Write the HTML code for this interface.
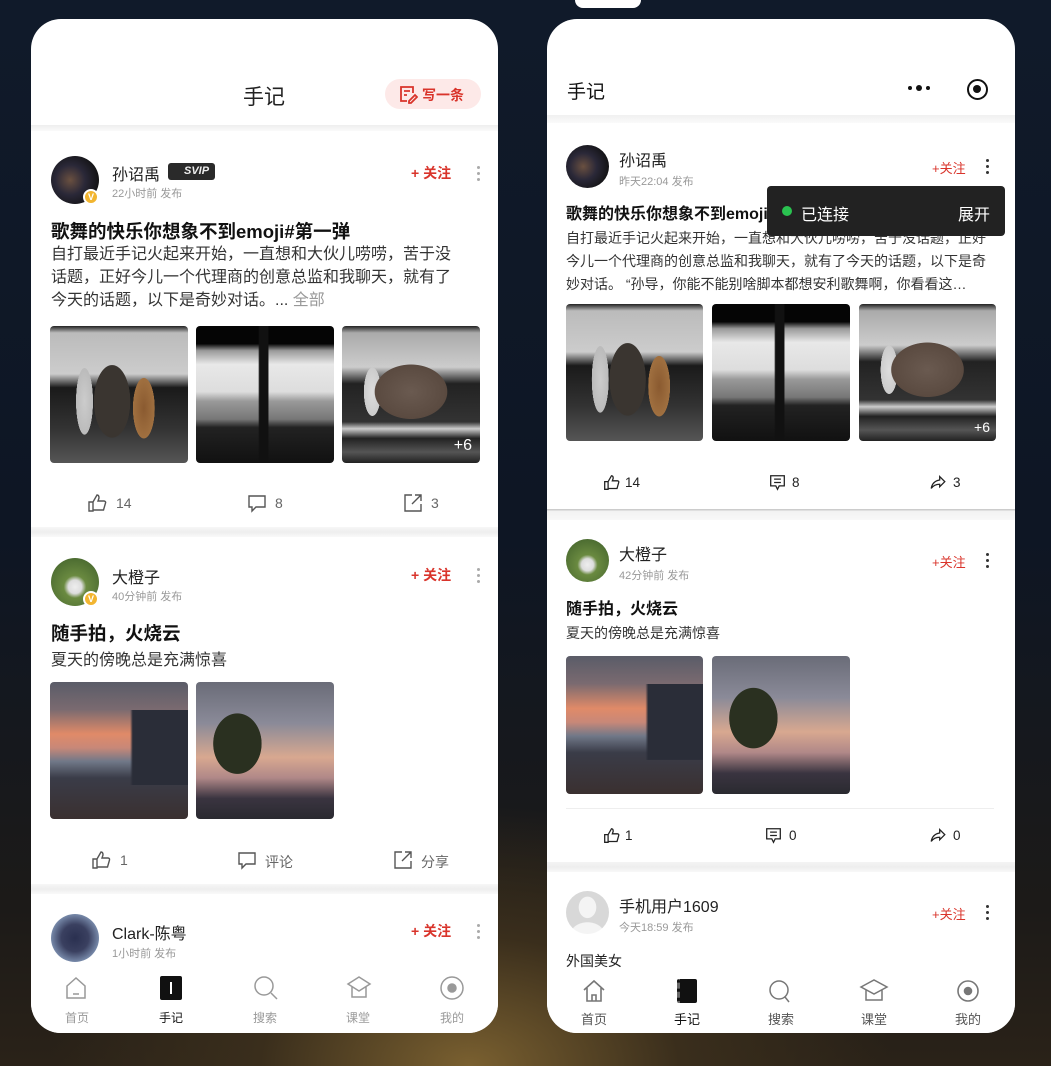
<!DOCTYPE html>
<html><head><meta charset="utf-8">
<style>
*{margin:0;padding:0;box-sizing:border-box}
body{width:1051px;height:1066px;overflow:hidden;position:relative;font-family:"Liberation Sans","Noto Sans CJK SC",sans-serif;
background:radial-gradient(ellipse 420px 260px at 470px 1066px,#7a6030 0%,#3a2e1c 50%,transparent 100%),linear-gradient(180deg,#101a2a 0%,#0e1624 50%,#1c1a18 85%,#2a2218 100%);}
.a{position:absolute}
.ph{position:absolute;background:#fff;border-radius:30px;overflow:hidden}
.t{position:absolute;white-space:nowrap;color:#222}
.sep{position:absolute;background:#f2f2f2}
.av{position:absolute;border-radius:50%;overflow:hidden}
.red{color:#d9342b}
.gray{color:#999}
.dots{position:absolute;width:3px}
.dots i{display:block;width:3px;height:3px;border-radius:50%;background:#aaa;margin-bottom:3px}
.img{position:absolute;border-radius:4px;overflow:hidden}
.dance1{background:radial-gradient(ellipse 30px 60px at 45% 55%,#3a3530 0%,#3a3530 60%,transparent 61%),radial-gradient(ellipse 14px 55px at 25% 55%,#ccc 0%,#bbb 60%,transparent 61%),radial-gradient(ellipse 18px 50px at 68% 60%,#8a5a30 0%,#a07040 60%,transparent 61%),linear-gradient(180deg,#222 0%,#bbb 5%,#ccc 35%,#1a1a1a 45%,#333 75%,#555 100%)}
.dance2{background:linear-gradient(90deg,transparent 45%,#111 46%,#111 52%,transparent 53%),linear-gradient(180deg,#050505 0%,#050505 13%,#999 18%,#e8e8e8 28%,#ddd 48%,#999 55%,#777 68%,#222 74%,#111 100%)}
.dance3{background:radial-gradient(ellipse 60px 45px at 50% 48%,#6a5a50 0%,#5a4a40 60%,transparent 61%),radial-gradient(ellipse 14px 40px at 22% 48%,#ddd 0%,#ccc 60%,transparent 61%),linear-gradient(180deg,#222 0%,#aaa 5%,#ccc 30%,#222 42%,#333 70%,#ccc 75%,#222 82%,#555 92%,#222 100%)}
.sun1{background:linear-gradient(90deg,transparent 58%,#2a2d38 60%,#2a2d38 100%) no-repeat 0 45%/100% 55%,linear-gradient(180deg,#5a5c68 0%,#7a6a70 20%,#e08a68 38%,#c88878 48%,#707888 58%,#3a3c48 70%,#3a3030 100%)}
.sun2{background:radial-gradient(ellipse 40px 50px at 30% 45%,#2a3020 0%,#2a3020 60%,transparent 61%),linear-gradient(180deg,#6a6c78 0%,#8a8a98 30%,#d8a890 55%,#b08888 70%,#3a3440 85%,#2a2a30 100%)}
.nav{position:absolute;text-align:center;font-size:12px;color:#999;width:60px}
</style></head><body>
<div class="a" style="left:575px;top:0;width:66px;height:8px;background:#fff;border-radius:0 0 33px 33px"></div>

<!-- LEFT PHONE -->
<div class="ph" style="left:31px;top:19px;width:467px;height:1014px">
  <div class="t" style="left:212px;top:62px;font-size:21px;color:#222">手记</div>
  <div class="a" style="left:354px;top:60px;width:96px;height:30px;border-radius:15px;background:#fde9e8"></div>
  <svg class="a" style="left:367px;top:65px" width="20" height="20" viewBox="0 0 20 20" fill="none" stroke="#d9342b" stroke-width="1.8"><path d="M15 9V3H3v14h6M6 7h6M6 11h3M11 17l6-6 2 2-6 6h-2z"/></svg>
  <div class="t red" style="left:391px;top:66px;font-size:14px;font-weight:bold">写一条</div>
  <div class="sep" style="left:0;top:106px;width:467px;height:6px;background:linear-gradient(#eee,#fafafa)"></div>

  <div class="av" style="left:20px;top:137px;width:48px;height:48px;background:radial-gradient(circle at 40% 50%,#6a5040 0%,#2a2838 40%,#111 80%)"></div>
  <div class="a" style="left:52px;top:170px;width:16px;height:16px;border-radius:50%;background:#f2b530;border:2px solid #fff;color:#fff;font-size:9px;text-align:center;line-height:12px;font-weight:bold">V</div>
  <div class="t" style="left:81px;top:142px;font-size:16px">孙诏禹</div>
  <div class="a" style="left:137px;top:144px;width:47px;height:17px;background:#2a2a2a;border-radius:3px;color:#eee;font-size:11px;font-style:italic;font-weight:bold;line-height:17px;padding-left:16px">SVIP</div>
  <div class="t gray" style="left:81px;top:166px;font-size:11px">22小时前 发布</div>
  <div class="t red" style="left:380px;top:144px;font-size:14px;font-weight:bold">+ 关注</div>
  <div class="dots" style="left:446px;top:147px"><i></i><i></i><i></i></div>
  <div class="t" style="left:20px;top:199px;font-size:18.5px;font-weight:bold;color:#111">歌舞的快乐你想象不到emoji#第一弹</div>
  <div class="a" style="left:20px;top:224px;width:410px;font-size:16px;line-height:23px;color:#333">自打最近手记火起来开始，一直想和大伙儿唠唠，苦于没话题，正好今儿一个代理商的创意总监和我聊天，就有了今天的话题，以下是奇妙对话。... <span class="gray">全部</span></div>
  <div class="img dance1" style="left:19px;top:307px;width:138px;height:137px"></div>
  <div class="img dance2" style="left:165px;top:307px;width:138px;height:137px"></div>
  <div class="img dance3" style="left:311px;top:307px;width:138px;height:137px"><div class="t" style="right:8px;bottom:8px;color:#fff;font-size:16px">+6</div></div>
  <svg class="a" style="left:56px;top:474px" width="20" height="20" viewBox="0 0 20 20" fill="none" stroke="#555" stroke-width="1.4"><path d="M2 9h4v9H2zM6 9l4-7c2 0 2 2 2 3l-1 3h6c1 0 2 1 1.5 2l-2 7H6"/></svg>
  <div class="t" style="left:85px;top:476px;font-size:14px;color:#666">14</div>
  <svg class="a" style="left:216px;top:474px" width="20" height="20" viewBox="0 0 20 20" fill="none" stroke="#555" stroke-width="1.4"><path d="M2 3h16v11H9l-4 4v-4H2z"/></svg>
  <div class="t" style="left:244px;top:476px;font-size:14px;color:#666">8</div>
  <svg class="a" style="left:372px;top:474px" width="20" height="20" viewBox="0 0 20 20" fill="none" stroke="#555" stroke-width="1.4"><path d="M9 2H2v16h16v-7M12 2h6v6M18 2l-9 9"/></svg>
  <div class="t" style="left:400px;top:476px;font-size:14px;color:#666">3</div>
  <div class="sep" style="left:0;top:508px;width:467px;height:10px;background:linear-gradient(#f7f7f7,#eee,#f9f9f9)"></div>

  <div class="av" style="left:20px;top:539px;width:48px;height:48px;background:radial-gradient(circle at 50% 60%,#eee 0%,#ddd 18%,#6a8a40 30%,#4a6a30 80%)"></div>
  <div class="a" style="left:52px;top:572px;width:16px;height:16px;border-radius:50%;background:#f2b530;border:2px solid #fff;color:#fff;font-size:9px;text-align:center;line-height:12px;font-weight:bold">V</div>
  <div class="t" style="left:81px;top:545px;font-size:16px">大橙子</div>
  <div class="t gray" style="left:81px;top:569px;font-size:11px">40分钟前 发布</div>
  <div class="t red" style="left:380px;top:546px;font-size:14px;font-weight:bold">+ 关注</div>
  <div class="dots" style="left:446px;top:549px"><i></i><i></i><i></i></div>
  <div class="t" style="left:20px;top:601px;font-size:18.5px;font-weight:bold;color:#111">随手拍，火烧云</div>
  <div class="t" style="left:20px;top:627px;font-size:16px;color:#333">夏天的傍晚总是充满惊喜</div>
  <div class="img sun1" style="left:19px;top:663px;width:138px;height:137px"></div>
  <div class="img sun2" style="left:165px;top:663px;width:138px;height:137px"></div>
  <svg class="a" style="left:60px;top:831px" width="20" height="20" viewBox="0 0 20 20" fill="none" stroke="#555" stroke-width="1.4"><path d="M2 9h4v9H2zM6 9l4-7c2 0 2 2 2 3l-1 3h6c1 0 2 1 1.5 2l-2 7H6"/></svg>
  <div class="t" style="left:89px;top:833px;font-size:14px;color:#666">1</div>
  <svg class="a" style="left:206px;top:831px" width="20" height="20" viewBox="0 0 20 20" fill="none" stroke="#555" stroke-width="1.4"><path d="M2 3h16v11H9l-4 4v-4H2z"/></svg>
  <div class="t" style="left:234px;top:833px;font-size:14px;color:#666">评论</div>
  <svg class="a" style="left:362px;top:831px" width="20" height="20" viewBox="0 0 20 20" fill="none" stroke="#555" stroke-width="1.4"><path d="M9 2H2v16h16v-7M12 2h6v6M18 2l-9 9"/></svg>
  <div class="t" style="left:390px;top:833px;font-size:14px;color:#666">分享</div>
  <div class="sep" style="left:0;top:865px;width:467px;height:10px;background:linear-gradient(#f7f7f7,#eee,#f9f9f9)"></div>

  <div class="av" style="left:20px;top:895px;width:48px;height:48px;background:radial-gradient(circle at 50% 50%,#2a3050 0%,#3a4060 40%,#8aa0c0 80%)"></div>
  <div class="t" style="left:81px;top:901px;font-size:16px">Clark-陈粤</div>
  <div class="t gray" style="left:81px;top:926px;font-size:11px">1小时前 发布</div>
  <div class="t red" style="left:380px;top:902px;font-size:14px;font-weight:bold">+ 关注</div>
  <div class="dots" style="left:446px;top:905px"><i></i><i></i><i></i></div>

  <div class="a" style="left:0;top:943px;width:467px;height:71px;background:#fff"></div>
  <svg class="a" style="left:34px;top:957px" width="22" height="24" viewBox="0 0 22 24" fill="none" stroke="#999" stroke-width="1.5"><path d="M2 10L11 2l9 8v12H2z M8 18h6"/></svg>
  <div class="nav" style="left:16px;top:990px">首页</div>
  <div class="a" style="left:129px;top:957px;width:22px;height:24px;background:#111;border-radius:2px"><div class="a" style="left:10px;top:6px;width:2px;height:12px;background:#fff"></div></div>
  <div class="nav" style="left:110px;top:990px;color:#111">手记</div>
  <svg class="a" style="left:222px;top:956px" width="26" height="26" viewBox="0 0 26 26" fill="none" stroke="#999" stroke-width="1.5"><circle cx="11" cy="11" r="9"/><path d="M18 18l6 6"/></svg>
  <div class="nav" style="left:204px;top:990px">搜索</div>
  <svg class="a" style="left:315px;top:956px" width="26" height="26" viewBox="0 0 26 26" fill="none" stroke="#999" stroke-width="1.5"><path d="M2 9l11-7 11 7-11 7zM6 12v10h14V12"/></svg>
  <div class="nav" style="left:297px;top:990px">课堂</div>
  <svg class="a" style="left:408px;top:956px" width="26" height="26" viewBox="0 0 26 26" fill="none" stroke="#999" stroke-width="1.5"><circle cx="13" cy="13" r="11"/><circle cx="13" cy="13" r="4" fill="#999"/></svg>
  <div class="nav" style="left:391px;top:990px">我的</div>
</div>

<!-- RIGHT PHONE -->
<div class="ph" style="left:547px;top:19px;width:468px;height:1014px">
  <div class="t" style="left:20px;top:58px;font-size:19px;color:#111">手记</div>
  <div class="a" style="left:350px;top:52px;width:100px;height:36px;border-radius:18px;background:#fff"></div>
  <div class="a" style="left:361px;top:67px;width:4px;height:4px;border-radius:50%;background:#111"></div>
  <div class="a" style="left:369px;top:66px;width:6px;height:6px;border-radius:50%;background:#111"></div>
  <div class="a" style="left:379px;top:67px;width:4px;height:4px;border-radius:50%;background:#111"></div>
  <div class="a" style="left:420px;top:60px;width:21px;height:21px;border-radius:50%;border:2.5px solid #111"><div class="a" style="left:4px;top:4px;width:8px;height:8px;border-radius:50%;background:#111"></div></div>
  <div class="sep" style="left:0;top:96px;width:468px;height:8px;background:linear-gradient(#f0f0f0,#fafafa)"></div>

  <div class="av" style="left:19px;top:126px;width:43px;height:43px;background:radial-gradient(circle at 40% 50%,#6a5040 0%,#2a2838 40%,#111 80%)"></div>
  <div class="t" style="left:72px;top:128px;font-size:16px;color:#222">孙诏禹</div>
  <div class="t gray" style="left:72px;top:154px;font-size:11px">昨天22:04 发布</div>
  <div class="t red" style="left:385px;top:139px;font-size:13px">+关注</div>
  <div class="dots" style="left:439px;top:140px"><i style="background:#333"></i><i style="background:#333"></i><i style="background:#333"></i></div>
  <div class="t" style="left:19px;top:181px;font-size:16px;font-weight:bold;color:#111">歌舞的快乐你想象不到emoji#第一弹</div>
  <div class="a" style="left:19px;top:208px;width:432px;font-size:14px;line-height:23px;color:#333">自打最近手记火起来开始，一直想和大伙儿唠唠，苦于没话题，正好今儿一个代理商的创意总监和我聊天，就有了今天的话题，以下是奇妙对话。 “孙导，你能不能别啥脚本都想安利歌舞啊，你看看这…</div>
  <div class="a" style="left:220px;top:167px;width:238px;height:50px;background:#222;border-radius:4px"></div>
  <div class="a" style="left:235px;top:187px;width:10px;height:10px;border-radius:50%;background:#2ac250"></div>
  <div class="t" style="left:254px;top:182px;font-size:16px;color:#fff">已连接</div>
  <div class="t" style="left:411px;top:182px;font-size:16px;color:#fff">展开</div>
  <div class="img dance1" style="left:19px;top:285px;width:137px;height:137px"></div>
  <div class="img dance2" style="left:165px;top:285px;width:138px;height:137px"></div>
  <div class="img dance3" style="left:312px;top:285px;width:137px;height:137px"><div class="t" style="right:6px;bottom:6px;color:#fff;font-size:14px">+6</div></div>
  <svg class="a" style="left:56px;top:455px" width="17" height="17" viewBox="0 0 20 20" fill="none" stroke="#222" stroke-width="1.5"><path d="M2 9h4v9H2zM6 9l4-7c2 0 2 2 2 3l-1 3h6c1 0 2 1 1.5 2l-2 7H6"/></svg>
  <div class="t" style="left:78px;top:456px;font-size:13.5px;color:#222">14</div>
  <svg class="a" style="left:222px;top:455px" width="17" height="17" viewBox="0 0 20 20" fill="none" stroke="#222" stroke-width="1.5"><path d="M2 2h16v12h-6l-2 4-2-4H2zM6 6h8M6 10h8"/></svg>
  <div class="t" style="left:245px;top:456px;font-size:13.5px;color:#222">8</div>
  <svg class="a" style="left:382px;top:455px" width="18" height="17" viewBox="0 0 20 20" fill="none" stroke="#222" stroke-width="1.5"><path d="M12 3l6 6-6 6v-3c-5 0-8 2-10 5 1-6 4-9 10-10z"/></svg>
  <div class="t" style="left:406px;top:456px;font-size:13.5px;color:#222">3</div>
  <div class="sep" style="left:0;top:490px;width:468px;height:11px;background:linear-gradient(#ccc 0,#ccc 1px,#f2f2f2 2px,#f8f8f8)"></div>

  <div class="av" style="left:19px;top:520px;width:43px;height:43px;background:radial-gradient(circle at 50% 60%,#eee 0%,#ddd 18%,#6a8a40 30%,#4a6a30 80%)"></div>
  <div class="t" style="left:72px;top:522px;font-size:16px;color:#222">大橙子</div>
  <div class="t gray" style="left:72px;top:548px;font-size:11px">42分钟前 发布</div>
  <div class="t red" style="left:385px;top:533px;font-size:13px">+关注</div>
  <div class="dots" style="left:439px;top:534px"><i style="background:#333"></i><i style="background:#333"></i><i style="background:#333"></i></div>
  <div class="t" style="left:19px;top:576px;font-size:16px;font-weight:bold;color:#111">随手拍，火烧云</div>
  <div class="t" style="left:19px;top:604px;font-size:14px;color:#333">夏天的傍晚总是充满惊喜</div>
  <div class="img sun1" style="left:19px;top:637px;width:137px;height:138px"></div>
  <div class="img sun2" style="left:165px;top:637px;width:138px;height:138px"></div>
  <div class="a" style="left:19px;top:789px;width:428px;height:1px;background:#eee"></div>
  <svg class="a" style="left:56px;top:808px" width="17" height="17" viewBox="0 0 20 20" fill="none" stroke="#222" stroke-width="1.5"><path d="M2 9h4v9H2zM6 9l4-7c2 0 2 2 2 3l-1 3h6c1 0 2 1 1.5 2l-2 7H6"/></svg>
  <div class="t" style="left:78px;top:809px;font-size:13.5px;color:#222">1</div>
  <svg class="a" style="left:218px;top:808px" width="17" height="17" viewBox="0 0 20 20" fill="none" stroke="#222" stroke-width="1.5"><path d="M2 2h16v12h-6l-2 4-2-4H2zM6 6h8M6 10h8"/></svg>
  <div class="t" style="left:242px;top:809px;font-size:13.5px;color:#222">0</div>
  <svg class="a" style="left:382px;top:808px" width="18" height="17" viewBox="0 0 20 20" fill="none" stroke="#222" stroke-width="1.5"><path d="M12 3l6 6-6 6v-3c-5 0-8 2-10 5 1-6 4-9 10-10z"/></svg>
  <div class="t" style="left:406px;top:809px;font-size:13.5px;color:#222">0</div>
  <div class="sep" style="left:0;top:843px;width:468px;height:10px;background:linear-gradient(#f4f4f4,#eee,#f8f8f8)"></div>

  <div class="av" style="left:19px;top:872px;width:43px;height:43px;background:radial-gradient(ellipse 9px 11px at 50% 38%,#f4f4f4 0%,#f4f4f4 95%,transparent 100%),radial-gradient(ellipse 17px 12px at 50% 100%,#f4f4f4 0%,#f4f4f4 95%,transparent 100%),#d8d8d8"></div>
  <div class="t" style="left:72px;top:874px;font-size:16px;color:#222">手机用户1609</div>
  <div class="t gray" style="left:72px;top:900px;font-size:11px">今天18:59 发布</div>
  <div class="t red" style="left:385px;top:885px;font-size:13px">+关注</div>
  <div class="dots" style="left:439px;top:886px"><i style="background:#333"></i><i style="background:#333"></i><i style="background:#333"></i></div>
  <div class="t" style="left:19px;top:932px;font-size:14px;color:#222">外国美女</div>

  <div class="a" style="left:0;top:955px;width:468px;height:59px;background:#fff"></div>
  <svg class="a" style="left:35px;top:960px" width="24" height="24" viewBox="0 0 24 24" fill="none" stroke="#777" stroke-width="1.6"><path d="M2 11L12 2l10 9M5 9v13h14V9M10 22v-6h4v6"/></svg>
  <div class="nav" style="left:17px;top:990px;font-size:13px;color:#555">首页</div>
  <div class="a" style="left:130px;top:960px;width:20px;height:24px;background:#111;border-radius:2px;border-left:3px dashed #666"></div>
  <div class="nav" style="left:110px;top:990px;font-size:13px;color:#111">手记</div>
  <svg class="a" style="left:221px;top:960px" width="24" height="26" viewBox="0 0 24 26" fill="none" stroke="#777" stroke-width="1.5"><circle cx="11" cy="11" r="9"/><path d="M17 18l4 5"/></svg>
  <div class="nav" style="left:204px;top:990px;font-size:13px;color:#555">搜索</div>
  <svg class="a" style="left:312px;top:959px" width="30" height="26" viewBox="0 0 30 26" fill="none" stroke="#777" stroke-width="1.5"><path d="M2 9l13-7 13 7-13 7zM7 12v10h16V12"/></svg>
  <div class="nav" style="left:297px;top:990px;font-size:13px;color:#555">课堂</div>
  <svg class="a" style="left:408px;top:959px" width="26" height="26" viewBox="0 0 26 26" fill="none" stroke="#777" stroke-width="1.6"><circle cx="13" cy="13" r="10"/><circle cx="13" cy="13" r="3.5" fill="#777"/></svg>
  <div class="nav" style="left:391px;top:990px;font-size:13px;color:#555">我的</div>
</div>
</body></html>
